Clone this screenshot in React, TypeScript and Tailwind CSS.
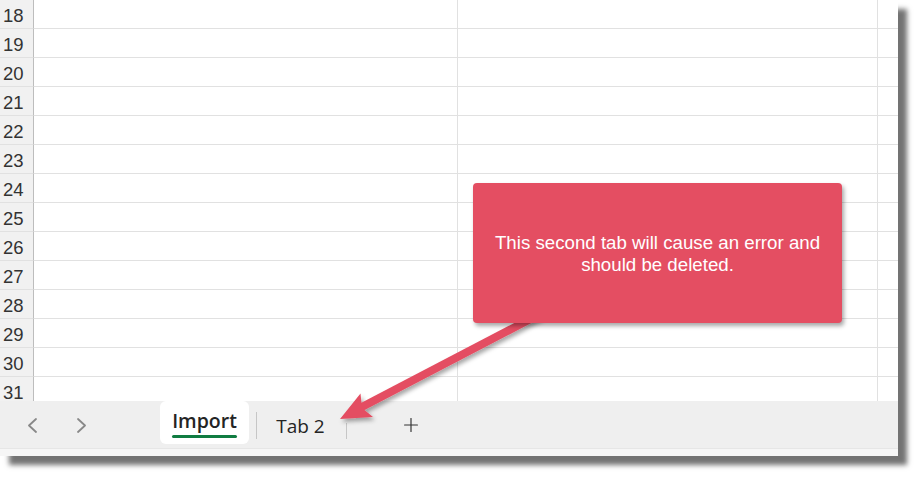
import React from 'react';
import { Plus } from 'lucide-react';

const rows = [18, 19, 20, 21, 22, 23, 24, 25, 26, 27, 28, 29, 30, 31];

const SheetRow = ({ n }: { n: number }) => (
  <div className="flex h-[29px] shrink-0">
    <div className="w-[34px] shrink-0 bg-[#f1f1f1] border-r border-r-[#bdbdbd] border-b border-b-[#e1e1e1] pl-[3px] pt-[6px] leading-[19px] text-[18.5px] text-[#333] font-['Liberation_Sans',Arial,sans-serif]">
      {n}
    </div>
    <div className="w-[424px] shrink-0 border-r border-r-[#e1e1e1] border-b border-b-[#e1e1e1]" />
    <div className="w-[420px] shrink-0 border-r border-r-[#e1e1e1] border-b border-b-[#e1e1e1]" />
    <div className="flex-1 border-b border-b-[#e1e1e1]" />
  </div>
);

const Chevron = ({ dir }: { dir: 'left' | 'right' }) => (
  <svg width="11" height="15" viewBox="0 0 11 15" fill="none" stroke="#888" strokeWidth="1.8" strokeLinecap="round" strokeLinejoin="round">
    {dir === 'left' ? <polyline points="9,1 2,7.5 9,14" /> : <polyline points="2,1 9,7.5 2,14" />}
  </svg>
);

const TabBar = () => (
  <div className="h-[55px] shrink-0 flex flex-col font-['Open_Sans','Noto_Sans',sans-serif]">
    <div className="h-[47px] bg-[#efefef] flex items-start">
      <div className="w-[160px] h-full flex items-center gap-[38px] pl-[27px] pt-[2px]">
        <Chevron dir="left" />
        <Chevron dir="right" />
      </div>
      <div className="w-[89px] h-[43px] bg-white rounded-[6px] flex flex-col items-center pt-[7px]">
        <span className="text-[19.5px] font-semibold text-[#242424] leading-[26px]">Import</span>
        <span className="mt-[1px] w-[65px] h-[3px] bg-[#107c41] rounded-sm" />
      </div>
      <div className="ml-[7px] mt-[11px] w-px h-[27px] bg-[#c6c6c6]" />
      <div className="w-[89px] h-full flex items-center justify-center pt-[2px] pr-[2px]">
        <span className="text-[19px] text-[#242424] leading-[26px]">Tab 2</span>
      </div>
      <div className="mt-[22px] w-px h-[16px] bg-[#c6c6c6]" />
      <div className="ml-[53px] h-full flex items-center text-[#333]">
        <Plus size={22} strokeWidth={1.3} />
      </div>
    </div>
    <div className="h-[8px] bg-[#f6f6f6] border-t border-t-[#e6e6e6]" />
  </div>
);

export default function App() {
  return (
    <div className="relative w-[921px] h-[479px] bg-white overflow-hidden">
      <div className="w-[898px] h-[456px] flex flex-col bg-white shadow-[9px_9px_5px_rgba(0,0,0,0.55)]">
        <div className="h-[401px] shrink-0 overflow-hidden flex flex-col">
          {rows.map((n) => (
            <SheetRow key={n} n={n} />
          ))}
        </div>
        <TabBar />
      </div>

      {/* arrow */}
      <svg className="absolute inset-0" width="921" height="479" viewBox="0 0 921 479">
        <defs>
          <filter id="sh" x="-20%" y="-20%" width="140%" height="140%">
            <feDropShadow dx="2" dy="3" stdDeviation="2" floodColor="#000" floodOpacity="0.35" />
          </filter>
        </defs>
        <g filter="url(#sh)" fill="#e44e62">
          <line x1="358" y1="409" x2="540" y2="314" stroke="#e44e62" strokeWidth="8" />
          <polygon points="340,419 360.5,393.5 362,408 373,417" />
        </g>
      </svg>

      {/* callout */}
      <div className="absolute left-[473px] top-[183px] w-[369px] h-[140px] bg-[#e44e62] rounded-[4px] shadow-[2px_3px_4px_rgba(0,0,0,0.35)] flex items-center justify-center text-center px-1">
        <p className="text-white text-[18.7px] leading-[22px] pt-[1px] font-['Liberation_Sans',Arial,sans-serif]">
          This second tab will cause an error and
          <br />
          should be deleted.
        </p>
      </div>
    </div>
  );
}
